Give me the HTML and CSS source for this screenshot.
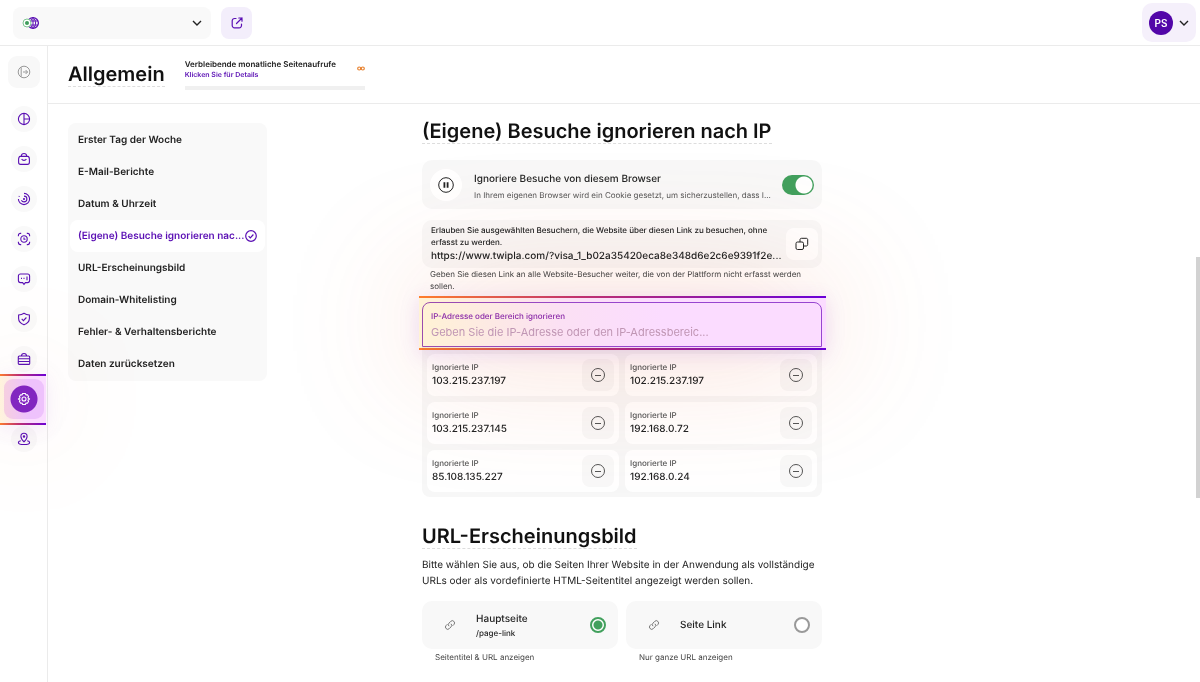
FILE: index.html
```html
<!DOCTYPE html>
<html lang="de">
<head>
  <meta charset="UTF-8">
  <meta name="viewport" content="width=device-width, initial-scale=1.0">
  <title>Allgemein</title>
  <link rel="stylesheet" href="styles.css">
</head>
<body>

  <header class="topbar">
    <div class="site-select">
      <svg class="site-icon" width="18" height="14" viewBox="0 0 18 14" fill="none">
        <circle cx="11" cy="7" r="5.4" stroke="#5a0fb4" stroke-width="1.3"/>
        <path d="M6 5h10M6 9h10M11 1.5v11M11 1.5c-3.5 3-3.5 8 0 11M11 1.5c3.5 3 3.5 8 0 11" stroke="#5a0fb4"/>
        <circle cx="5" cy="7" r="4" fill="#fff" stroke="#7fc493"/>
        <circle cx="5" cy="7" r="2" fill="#3f9d5c"/>
      </svg>
      <select aria-label="Website"><option></option></select>
      <svg class="chevron" width="10" height="6" viewBox="0 0 10 6" fill="none" stroke="#222" stroke-width="1.4"><path d="M1 1l4 4 4-4"/></svg>
    </div>
    <button type="button" class="open-btn" aria-label="Website öffnen">
      <svg width="12" height="12" viewBox="0 0 12 12" fill="none" stroke="#5a0fb4" stroke-width="1.2" stroke-linecap="round">
        <path d="M5 1.5H3.5a2.3 2.3 0 0 0-2.3 2.3v4.7a2.3 2.3 0 0 0 2.3 2.3h4.7a2.3 2.3 0 0 0 2.3-2.3V7"/>
        <path d="M5.5 6.5L11 1M7.8 1H11v3.2"/>
      </svg>
    </button>
    <button type="button" class="user-btn">
      <span class="avatar">PS</span>
      <svg width="10" height="6" viewBox="0 0 10 6" fill="none" stroke="#222" stroke-width="1.4"><path d="M1 1l4 4 4-4"/></svg>
    </button>
  </header>

  <div class="layout">
    <nav class="rail" aria-label="Hauptmenü">
      <button type="button" class="rail-toggle" aria-label="Menü ausklappen">
        <svg width="14" height="14" viewBox="0 0 14 14" fill="none" stroke="#999"><circle cx="7" cy="7" r="5.8"/><path d="M4.2 2.3v9.4M6 7h4.5M8.6 5l2 2-2 2"/></svg>
      </button>
      <a href="#" class="rail-item" aria-label="Dashboard">
        <svg class="icon" viewBox="0 0 14 14"><circle cx="7" cy="7" r="5.6"/><path d="M7 1.4v11.2M7 7h5.6"/></svg>
      </a>
      <a href="#" class="rail-item" aria-label="Shop">
        <svg class="icon" viewBox="0 0 14 14"><path d="M3.2 4.4h7.6c1 0 1.6 1.4 1.6 3.2v2.6c0 1.4-.8 2.2-2 2.2H3.6c-1.2 0-2-.8-2-2.2V7.6c0-1.800.6-3.200 1.600-3.200zM4.200 4.200C4.400 2.600 5.400 1.500 7 1.500s2.600 1.100 2.800 2.700M4.600 7c.6 1 1.400 1.400 2.400 1.400S8.800 8 9.400 7"/></svg>
      </a>
      <a href="#" class="rail-item" aria-label="Verhalten">
        <svg class="icon" viewBox="0 0 14 14"><path d="M7 1.4a5.6 5.6 0 1 1-5.6 5.6M7 4.100a2.900 2.900 0 0 1 0 5.800 2.900 2.900 0 0 1-2.600-1.600M1.900 4.800l.5-.9"/><circle cx="7" cy="7" r=".5"/></svg>
      </a>
      <a href="#" class="rail-item" aria-label="Sitzungen">
        <svg class="icon" viewBox="0 0 14 14"><path d="M1.400 4.200V3.400a2 2 0 0 1 2-2h.8M9.800 1.400h.8a2 2 0 0 1 2 2v.8M12.600 9.800v.8a2 2 0 0 1-2 2h-.8M4.200 12.600h-.8a2 2 0 0 1-2-2v-.8"/><circle cx="7" cy="7" r="3.2"/><path d="M7 5.600v1.600h1.500"/></svg>
      </a>
      <a href="#" class="rail-item" aria-label="Feedback">
        <svg class="icon" viewBox="0 0 14 14"><path d="M3.400 2h7.200a2 2 0 0 1 2 2v4.600a2 2 0 0 1-2 2H8.400L7 12.400l-1.400-1.800H3.400a2 2 0 0 1-2-2V4a2 2 0 0 1 2-2zM4 6.400h1M6.500 6.400h1M10 4.600v3.600"/></svg>
      </a>
      <a href="#" class="rail-item" aria-label="Datenschutz">
        <svg class="icon" viewBox="0 0 14 14"><path d="M7 1.300c1.700 1.100 3.400 1.600 5.400 1.700v3.600c0 2.900-2 5-5.400 6.200-3.400-1.200-5.400-3.300-5.400-6.200V3C3.600 2.900 5.300 2.400 7 1.300zM4.700 6.900l1.700 1.700 3-3.100"/></svg>
      </a>
      <a href="#" class="rail-item" aria-label="Werkzeuge">
        <svg class="icon" viewBox="0 0 14 14"><rect x="1.3" y="4" width="11.4" height="8.4" rx="1"/><path d="M4.500 4c0-1.600.8-2.500 2.500-2.500S9.500 2.400 9.500 4M1.300 6.800h11.400M1.300 9.500h11.400"/></svg>
      </a>
      <a href="#" class="rail-item active" aria-label="Einstellungen" aria-current="page">
        <svg class="icon" viewBox="0 0 14 14"><path d="M5.600 1.500h2.800l.5 1.400 1.500-.1 1.200 2-.7 1.100L12.600 7l-1.700 1.100.7 1.100-1.200 2-1.500-.1-.5 1.400H5.600l-.5-1.400-1.500.1-1.200-2 .7-1.100L1.400 7l1.700-1.100-.7-1.100 1.200-2 1.500.1z" stroke-linejoin="round"/><circle cx="7" cy="7" r="2"/></svg>
      </a>
      <a href="#" class="rail-item" aria-label="Standorte">
        <svg class="icon" viewBox="0 0 14 14"><path d="M7 9.800C5 7.700 3.900 6.200 3.900 4.400a3.100 3.100 0 0 1 6.200 0C10.100 6.200 9 7.700 7 9.800z"/><circle cx="7" cy="4.4" r=".7"/><path d="M3.800 8.700c-1.400.3-2.400.8-2.400 1.700 0 1.300 2.500 2.100 5.600 2.100s5.600-.8 5.600-2.100c0-.9-1-1.400-2.400-1.700"/></svg>
      </a>
    </nav>

    <div class="page">
      <div class="page-head">
        <h1>Allgemein</h1>
        <div class="quota">
          <div class="quota-row">
            <div>
              <div class="quota-title">Verbleibende monatliche Seitenaufrufe</div>
              <a href="#" class="quota-link">Klicken Sie für Details</a>
            </div>
            <svg width="8" height="5" viewBox="0 0 8 5" fill="none" stroke="#e8812e" stroke-width="1.2"><circle cx="2.2" cy="2.5" r="1.5"/><circle cx="5.8" cy="2.5" r="1.5"/></svg>
          </div>
          <div class="quota-bar"></div>
        </div>
      </div>

      <div class="content">
        <nav class="subnav" aria-label="Einstellungen">
          <a href="#">Erster Tag der Woche</a>
          <a href="#">E-Mail-Berichte</a>
          <a href="#">Datum &amp; Uhrzeit</a>
          <a href="#" class="current">(Eigene) Besuche ignorieren nac...
            <svg width="12" height="12" viewBox="0 0 12 12" fill="none" stroke="#5a0fb4" stroke-width="1.2"><circle cx="6" cy="6" r="5.3"/><path d="M3.6 6.1l1.700 1.700 3.100-3.300"/></svg>
          </a>
          <a href="#">URL-Erscheinungsbild</a>
          <a href="#">Domain-Whitelisting</a>
          <a href="#">Fehler- &amp; Verhaltensberichte</a>
          <a href="#">Daten zurücksetzen</a>
        </nav>

        <main class="settings">
          <section>
            <h2>(Eigene) Besuche ignorieren nach IP</h2>

            <label class="toggle-row">
              <span class="round-icon">
                <svg width="16" height="16" viewBox="0 0 16 16" fill="none" stroke="#222"><circle cx="8" cy="8" r="7.3"/><path d="M6.4 5.2v5.6M9.600 5.200v5.600" stroke-width="1.8"/></svg>
              </span>
              <span class="toggle-text">
                <span class="row-title">Ignoriere Besuche von diesem Browser</span>
                <span class="small">In Ihrem eigenen Browser wird ein Cookie gesetzt, um sicherzustellen, dass I...</span>
              </span>
              <input type="checkbox" class="switch" checked>
            </label>

            <div class="link-box">
              <div class="link-text">
                <p>Erlauben Sie ausgewählten Besuchern, die Website über diesen Link zu besuchen, ohne erfasst zu werden.</p>
                <div class="link-url">https://www.twipla.com/?visa_1_b02a35420eca8e348d6e2c6e9391f2e...</div>
              </div>
              <button type="button" class="copy-btn" aria-label="Link kopieren">
                <svg width="14" height="14" viewBox="0 0 14 14" fill="none" stroke="#222"><rect x="1" y="5" width="7.5" height="7.5" rx="1.5"/><path d="M5 5V2.8c0-1 .5-1.500 1.500-1.500h4.700c1 0 1.500.5 1.500 1.500v4.700c0 1-.5 1.500-1.500 1.500H8.500"/></svg>
              </button>
            </div>
            <p class="hint">Geben Sie diesen Link an alle Website-Besucher weiter, die von der Plattform nicht erfasst werden sollen.</p>

            <div class="ip-field">
              <label for="ip">IP-Adresse oder Bereich ignorieren</label>
              <input type="text" id="ip" placeholder="Geben Sie die IP-Adresse oder den IP-Adressbereic...">
            </div>

            <ul class="ip-list">
              <li><div><span class="ip-label">Ignorierte IP</span><span class="ip-value">103.215.237.197</span></div><button type="button" aria-label="Entfernen"></button></li>
              <li><div><span class="ip-label">Ignorierte IP</span><span class="ip-value">102.215.237.197</span></div><button type="button" aria-label="Entfernen"></button></li>
              <li><div><span class="ip-label">Ignorierte IP</span><span class="ip-value">103.215.237.145</span></div><button type="button" aria-label="Entfernen"></button></li>
              <li><div><span class="ip-label">Ignorierte IP</span><span class="ip-value">192.168.0.72</span></div><button type="button" aria-label="Entfernen"></button></li>
              <li><div><span class="ip-label">Ignorierte IP</span><span class="ip-value">85.108.135.227</span></div><button type="button" aria-label="Entfernen"></button></li>
              <li><div><span class="ip-label">Ignorierte IP</span><span class="ip-value">192.168.0.24</span></div><button type="button" aria-label="Entfernen"></button></li>
            </ul>
          </section>

          <section class="url-section">
            <h2>URL-Erscheinungsbild</h2>
            <p class="lead">Bitte wählen Sie aus, ob die Seiten Ihrer Website in der Anwendung als vollständige URLs oder als vordefinierte HTML-Seitentitel angezeigt werden sollen.</p>
            <div class="options">
              <div>
                <label class="option">
                  <svg class="link-icon" viewBox="0 0 12 12"><path d="M5 7.200a2.200 2.200 0 0 1 0-3.100l1.700-1.700a2.200 2.200 0 0 1 3.200 0 2.200 2.200 0 0 1 0 3.100L8.600 6.800M7 4.800a2.200 2.200 0 0 1 0 3.100L5.300 9.600a2.200 2.200 0 0 1-3.200 0 2.200 2.200 0 0 1 0-3.100l1.300-1.300"/></svg>
                  <span class="option-text">Hauptseite<small>/page-link</small></span>
                  <input type="radio" name="url" checked>
                </label>
                <p class="option-hint">Seitentitel &amp; URL anzeigen</p>
              </div>
              <div>
                <label class="option">
                  <svg class="link-icon" viewBox="0 0 12 12"><path d="M5 7.200a2.200 2.200 0 0 1 0-3.100l1.700-1.700a2.200 2.200 0 0 1 3.200 0 2.200 2.200 0 0 1 0 3.100L8.600 6.800M7 4.800a2.200 2.200 0 0 1 0 3.100L5.300 9.600a2.200 2.200 0 0 1-3.200 0 2.200 2.200 0 0 1 0-3.100l1.300-1.300"/></svg>
                  <span class="option-text">Seite Link</span>
                  <input type="radio" name="url">
                </label>
                <p class="option-hint">Nur ganze URL anzeigen</p>
              </div>
            </div>
          </section>
        </main>
      </div>
    </div>
  </div>
  <div class="scroll-thumb"></div>

</body>
</html>
```
FILE: styles.css
```css
* {
  box-sizing: border-box;
}
body {
  margin: 0;
  height: 100vh;
  display: flex;
  flex-direction: column;
  overflow: hidden;
  font-family: Inter, "Liberation Sans", sans-serif;
  font-size: 10px;
  line-height: 16px;
  text-rendering: geometricPrecision;
  color: #222;
  background: #fff;
}
h1, h2, p, ul {
  margin: 0;
  padding: 0;
}
a {
  text-decoration: none;
  color: inherit;
}
button {
  border: none;
  padding: 0;
  font-family: inherit;
  cursor: pointer;
  display: flex;
  align-items: center;
  justify-content: center;
}
svg {
  flex-shrink: 0;
}

/* top bar */
.topbar {
  display: flex;
  align-items: center;
  flex-shrink: 0;
  gap: 10px;
  height: 46px;
  padding: 0 4px 0 13px;
  border-bottom: 1px solid #ebebeb;
}
.site-select {
  display: flex;
  align-items: center;
  width: 198px;
  height: 32px;
  padding: 0 9px;
  border-radius: 8px;
  background: #f9f9f9;
}
.site-select select {
  flex: 1;
  height: 32px;
  border: none;
  background: none;
  appearance: none;
}
.open-btn {
  width: 31px;
  height: 32px;
  border-radius: 8px;
  background: #f3eefb;
}
.user-btn {
  gap: 6px;
  width: 54px;
  height: 39px;
  margin-left: auto;
  border-radius: 10px;
  background: #f5f0fb;
}
.avatar {
  width: 24px;
  height: 24px;
  border-radius: 50%;
  background: #5206a8;
  color: #fff;
  font-size: 10px;
  font-weight: 600;
  line-height: 24px;
}

/* icon rail */
.layout {
  display: flex;
  flex: 1;
  min-height: 0;
}
.rail {
  display: flex;
  flex-direction: column;
  align-items: center;
  flex-shrink: 0;
  gap: 14px;
  width: 48px;
  padding-top: 10px;
  border-right: 1px solid #ebebeb;
}
.rail-toggle {
  width: 32px;
  height: 32px;
  margin-bottom: 4px;
  border-radius: 9px;
  background: #f8f8f8;
}
.rail-item {
  position: relative;
  display: flex;
  align-items: center;
  justify-content: center;
  width: 26px;
  height: 26px;
  border-radius: 50%;
  background: #f9f9f9;
}
.icon {
  width: 14px;
  height: 14px;
  fill: none;
  stroke: #5a0fb4;
  stroke-width: 1.1;
}
.rail-item.active {
  width: 28px;
  height: 28px;
  margin: -1px 0;
  background: #8a2bc8;
}
.rail-item.active .icon {
  position: relative;
  z-index: 3;
  stroke: #fff;
}
.rail-item.active::before {
  content: "";
  position: absolute;
  inset: -6px -6px;
  border-radius: 9px;
  background: radial-gradient(circle, #8226c0 13px, transparent 14px), linear-gradient(90deg, #f6cfe0, #eec2fc 60%);
  z-index: 2;
}
.rail-item.active::after {
  content: "";
  position: absolute;
  inset: -11px -8px -12px -10px;
  border-top: 2px solid;
  border-bottom: 2px solid;
  border-image: linear-gradient(90deg, #ff7f2b, #c03070 40%, #6a00d8) 1;
  background: linear-gradient(90deg, #fff3dc, #fbdcff 60%);
  box-shadow: 0 4px 20px rgba(150, 60, 220, 0.1), 0 0 120px rgba(235, 120, 70, 0.2);
  z-index: 1;
}

/* page head */
.page {
  flex: 1;
  min-width: 0;
}
.page-head {
  display: flex;
  align-items: center;
  gap: 20px;
  height: 58px;
  padding-left: 20px;
  border-bottom: 1px solid #ebebeb;
}
h1, h2 {
  width: fit-content;
  border-bottom: 1px dashed #ddd;
  color: #111;
  font-size: 20px;
  font-weight: 600;
  line-height: 24px;
}
.quota {
  width: 180px;
}
.quota-row {
  display: flex;
  align-items: center;
  justify-content: space-between;
}
.quota-title {
  font-size: 8px;
  font-weight: 600;
  line-height: 12px;
}
.quota-link {
  display: block;
  color: #5a0fb4;
  font-size: 7px;
  font-weight: 600;
  line-height: 10px;
}
.quota-bar {
  height: 4px;
  margin: 6px 0 2px;
  background: #f0f0f0;
}

/* content */
.content {
  display: grid;
  grid-template-columns: 1fr minmax(0, 400px) 1fr;
  align-items: start;
  padding: 15px 4px 0 0;
}
.subnav {
  width: 199px;
  margin: 4px 0 0 20px;
  padding: 1px 2px;
  border-radius: 8px;
  background: #f9f9f9;
}
.subnav a {
  display: flex;
  align-items: center;
  justify-content: space-between;
  height: 32px;
  padding: 0 8px;
  border-radius: 8px;
  font-weight: 600;
  white-space: nowrap;
}
.subnav .current {
  color: #5a0fb4;
  background: #fff;
}
.toggle-row {
  display: flex;
  align-items: center;
  gap: 12px;
  height: 49px;
  margin-top: 16px;
  padding: 0 8px;
  border-radius: 10px;
  background: #f8f8f8;
}
.round-icon {
  display: flex;
  align-items: center;
  justify-content: center;
  width: 32px;
  height: 32px;
  border-radius: 50%;
  background: #fff;
}
.toggle-text {
  flex: 1;
  min-width: 0;
  padding-top: 4px;
}
.row-title {
  display: block;
  font-weight: 500;
}
.small {
  display: block;
  color: #555;
  font-size: 8px;
  white-space: nowrap;
}
.switch {
  appearance: none;
  width: 32px;
  height: 20px;
  margin: 0;
  border-radius: 10px;
  background: radial-gradient(circle at 22px 10px, #fff 8px, #42a05d 9px);
}
.link-box {
  display: flex;
  align-items: center;
  justify-content: space-between;
  margin-top: 11px;
  padding: 4px 4px 4px 9px;
  border-radius: 10px;
  background: #f8f8f8;
}
.link-text {
  min-width: 0;
}
.link-text p {
  max-width: 340px;
  font-size: 8px;
  font-weight: 500;
  line-height: 12px;
}
.link-url {
  font-weight: 500;
  white-space: nowrap;
}
.copy-btn {
  flex-shrink: 0;
  width: 32px;
  height: 32px;
  border-radius: 8px;
  background: #fff;
}
.hint {
  padding: 0 8px;
  color: #444;
  font-size: 8px;
  line-height: 12px;
}

/* highlighted field */
.ip-field {
  position: relative;
  margin-top: 10px;
  height: 45px;
  padding: 5px 8px;
  border: 1px solid #9a50d0;
  border-radius: 8px 8px 0 0;
}
.ip-field::before {
  content: "";
  position: absolute;
  inset: -7px -5px -4px -4px;
  border-top: 2px solid;
  border-bottom: 2px solid;
  border-image: linear-gradient(90deg, #ff7f2b, #c03070 40%, #6a00d8) 1;
  background: linear-gradient(90deg, #fff3d4, #fbe0f4 35%, #fbdcff 60%);
  box-shadow: 0 4px 20px rgba(150, 60, 220, 0.16), 0 0 130px rgba(235, 110, 70, 0.34);
  mix-blend-mode: multiply;
  pointer-events: none;
  z-index: 1;
}
.ip-field label,
.ip-field input {
  position: relative;
  z-index: 2;
  display: block;
  width: 100%;
}
.ip-field label {
  color: #8a2aa8;
  font-size: 8px;
  font-weight: 500;
}
.ip-field input {
  height: 16px;
  padding: 0;
  border: none;
  outline: none;
  background: none;
  font-family: inherit;
  font-size: 11px;
}
.ip-field input::placeholder {
  color: #c096b4;
}
.ip-list {
  display: grid;
  grid-template-columns: 1fr 1fr;
  gap: 6px;
  padding: 7px 5px 5px;
  list-style: none;
  border-radius: 0 0 8px 8px;
  background: #f7f7f7;
}
.ip-list li {
  display: flex;
  align-items: center;
  justify-content: space-between;
  height: 42px;
  padding: 0 5px;
  border-radius: 8px;
  background: #fff;
}
.ip-label {
  display: block;
  color: #555;
  font-size: 8px;
  font-weight: 500;
  line-height: 12px;
}
.ip-value {
  display: block;
  font-weight: 500;
}
.ip-list button {
  width: 32px;
  height: 32px;
  border-radius: 8px;
  background: #f8f8f8;
}
.ip-list button::before {
  content: "";
  width: 12px;
  height: 12px;
  border: 1px solid #555;
  border-radius: 50%;
  background: linear-gradient(#555, #555) center / 6px 1px no-repeat;
}

/* url options */
.url-section {
  margin-top: 27px;
}
.lead {
  margin-top: 8px;
}
.options {
  display: grid;
  grid-template-columns: 1fr 1fr;
  gap: 8px;
  margin-top: 12px;
}
.option {
  display: flex;
  align-items: center;
  height: 48px;
  padding: 0 12px 0 22px;
  border-radius: 10px;
  background: #f8f8f8;
}
.link-icon {
  width: 12px;
  height: 12px;
  fill: none;
  stroke: #777;
}
.option-text {
  flex: 1;
  margin-left: 20px;
  font-weight: 500;
}
.option-text small {
  display: block;
  font-size: 8px;
  line-height: 12px;
}
.option input {
  appearance: none;
  width: 16px;
  height: 16px;
  margin: 0;
  border: 2px solid #999;
  border-radius: 50%;
  background: #fff;
}
.option input:checked {
  border-color: #42a05d;
  background: radial-gradient(circle, #42a05d 4px, #fff 5px);
}
.option-hint {
  padding-left: 13px;
  color: #444;
  font-size: 8px;
}

.scroll-thumb {
  position: absolute;
  top: 257px;
  right: 0;
  width: 4px;
  height: 241px;
  background: #d2d2d2;
}
```
